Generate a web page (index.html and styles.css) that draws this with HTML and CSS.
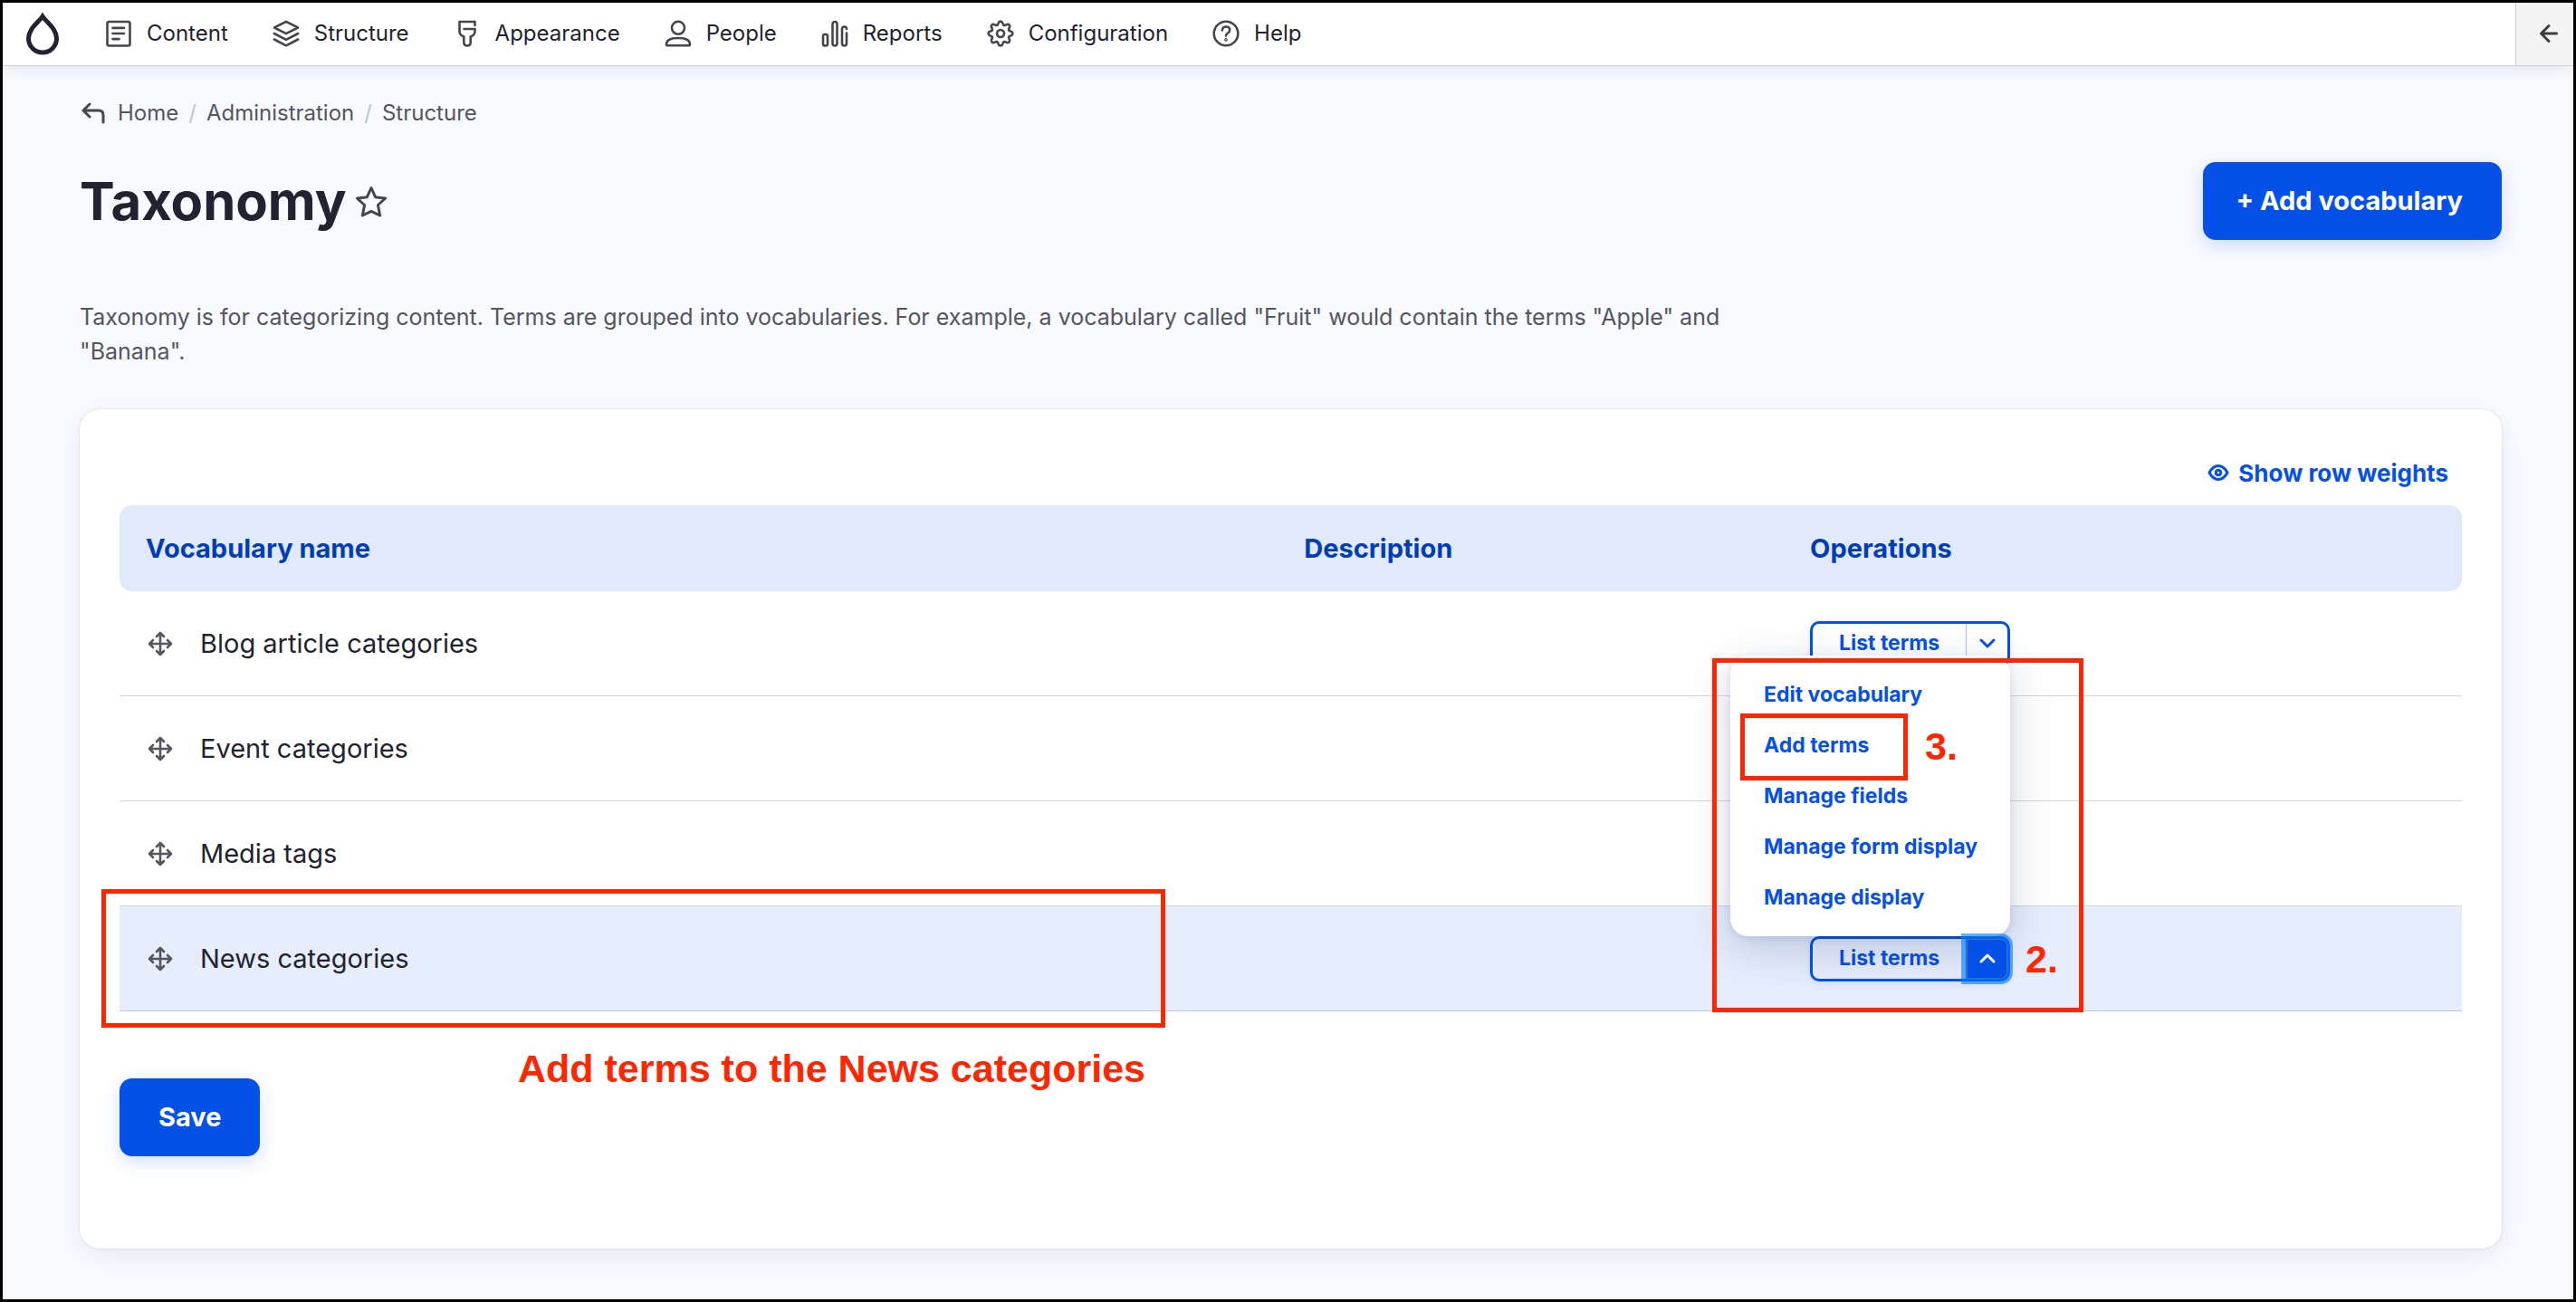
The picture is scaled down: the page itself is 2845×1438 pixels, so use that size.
FILE: index.html
```html
<!DOCTYPE html>
<html lang="en">
<head>
<meta charset="utf-8">
<title>Taxonomy</title>
<link rel="stylesheet" href="styles.css">
</head>
<body>
<header class="toolbar">
  <a class="logo" href="#" aria-label="Home"><svg width="38" height="48" viewBox="0 0 38 48"><path d="M19 5C14.500 12 3.500 18.500 3.500 29.500a15.500 15.500 0 0 0 31 0C34.500 18.500 23.500 12 19 5Z" stroke="#222330" stroke-width="5" stroke-linejoin="miter"/></svg></a>
  <nav class="menu">
    <a href="#"><svg class="icon" viewBox="0 0 30 30"><rect x="2.500" y="2" width="25" height="26.500" rx="2"/><path d="M8.500 8.900h12.500M8.500 15h12.500M8.500 21.100h7"/></svg>Content</a>
    <a href="#"><svg class="icon" viewBox="0 0 30 30"><path d="M15 1.800 28 8.500 15 15.200 2 8.500ZM1.800 15 15 21.800 28.200 15M1.800 21.500 15 28.300l13.200-6.800"/></svg>Structure</a>
    <a href="#"><svg class="icon" viewBox="0 0 30 30"><path d="M23.500 6V2H6.500v11q0 3.500 4.800 5.500v6q0 4 3.700 4t3.700-4v-6q4.800-2 4.800-5.500V10H11.500"/></svg>Appearance</a>
    <a href="#"><svg class="icon" viewBox="0 0 30 30"><circle cx="15" cy="8.800" r="7"/><path d="M2 27q0-7 13-7t13 7q0 1.300-1.500 1.300h-23Q2 28.300 2 27Z"/></svg>People</a>
    <a href="#"><svg class="icon" viewBox="0 0 30 30"><rect x="2" y="16" width="5" height="12.500" rx="2"/><rect x="12.500" y="2" width="5" height="26.500" rx="2.500"/><path d="M28 10q0-2.500-2.500-2.500T23 10v16q0 2.500 2.500 2.500T28 26V14.500"/></svg>Reports</a>
    <a href="#"><svg class="icon" viewBox="-15 -15 30 30">
      <path id="tooth" d="M-3.800-9.200c1-.4 1.300-1.400 1.600-2.600.3-1 1.200-1.600 2.200-1.600s1.900.6 2.200 1.600c.3 1.200.6 2.200 1.600 2.600"/>
      <use href="#tooth" transform="rotate(45)"/><use href="#tooth" transform="rotate(90)"/><use href="#tooth" transform="rotate(135)"/><use href="#tooth" transform="rotate(180)"/><use href="#tooth" transform="rotate(225)"/><use href="#tooth" transform="rotate(270)"/><use href="#tooth" transform="rotate(315)"/>
      <circle r="4"/></svg>Configuration</a>
    <a href="#"><svg class="icon" viewBox="0 0 30 30"><circle cx="15" cy="15" r="13.300"/><path d="M10.800 11.500q.5-4 4.200-4 4.200 0 4.200 3.700 0 2-2.200 3.300-2 1.200-2 3"/><circle cx="15" cy="21.800" r=".6"/></svg>Help</a>
  </nav>
  <button class="collapse" aria-label="Collapse toolbar"><svg width="22" height="22" viewBox="0 0 22 22"><path d="M19.500 11H3M11 2.500 2.500 11l8.500 8.500"/></svg></button>
</header>
<main class="page">
  <nav class="breadcrumb" aria-label="Breadcrumb">
    <svg width="26" height="24" viewBox="0 0 26 24"><path d="M9 2 2 9l7 7M2 9h17q5 0 5 5v8"/></svg>
    <a href="#">Home</a><span class="sep">/</span><a href="#">Administration</a><span class="sep">/</span><a href="#">Structure</a>
  </nav>
  <div class="title-row">
    <h1>Taxonomy</h1>
    <a class="star" href="#" aria-label="Add to shortcuts"><svg width="36" height="36" viewBox="0 0 36 36"><path d="m18 2.500 4.600 10.200 11 1.300-8.200 7.500 2.300 11.500L18 28.300 8.300 33l2.300-11.500L2.400 14l11-1.300Z"/></svg></a>
    <button class="primary add">+ Add vocabulary</button>
  </div>
  <p class="help">Taxonomy is for categorizing content. Terms are grouped into vocabularies. For example, a vocabulary called "Fruit" would contain the terms "Apple" and "Banana".</p>
  <form class="card">
    <button type="button" class="weights"><svg width="24" height="20" viewBox="0 0 24 20"><path d="M2 10q4-7.500 10-7.500T22 10q-4 7.500-10 7.500T2 10Z"/><circle cx="12" cy="10" r="2.800"/></svg>Show row weights</button>
    <table>
      <thead><tr><th class="c-name">Vocabulary name</th><th class="c-desc">Description</th><th>Operations</th></tr></thead>
      <tbody>
        <tr><td><div class="name"><svg class="move" viewBox="0 0 28 28"><path d="M14 2v24M2 14h24M10 6l4-4 4 4M10 22l4 4 4-4M6 10l-4 4 4 4M22 10l4 4-4 4"/></svg>Blog article categories</div></td><td></td>
          <td><div class="drop"><button type="button" class="list">List terms</button><button type="button" class="toggle" aria-label="More operations"><svg width="18" height="12" viewBox="0 0 18 12"><path d="m2 2 7 7 7-7"/></svg></button></div></td></tr>
        <tr><td><div class="name"><svg class="move" viewBox="0 0 28 28"><path d="M14 2v24M2 14h24M10 6l4-4 4 4M10 22l4 4 4-4M6 10l-4 4 4 4M22 10l4 4-4 4"/></svg>Event categories</div></td><td></td><td></td></tr>
        <tr><td><div class="name"><svg class="move" viewBox="0 0 28 28"><path d="M14 2v24M2 14h24M10 6l4-4 4 4M10 22l4 4 4-4M6 10l-4 4 4 4M22 10l4 4-4 4"/></svg>Media tags</div></td><td></td><td></td></tr>
        <tr class="active"><td><div class="name"><svg class="move" viewBox="0 0 28 28"><path d="M14 2v24M2 14h24M10 6l4-4 4 4M10 22l4 4 4-4M6 10l-4 4 4 4M22 10l4 4-4 4"/></svg>News categories</div><div class="mark mark-row"></div><p class="note note-row">Add terms to the News categories</p></td><td></td>
          <td><div class="drop open"><button type="button" class="list">List terms</button><button type="button" class="toggle" aria-label="Fewer operations" aria-expanded="true"><svg width="18" height="12" viewBox="0 0 18 12"><path d="m2 9 7-7 7 7"/></svg></button>
            <ul class="popup">
              <li><a href="#">Edit vocabulary</a></li>
              <li><a href="#">Add terms</a><div class="mark mark-item"></div><p class="note note-item">3.</p></li>
              <li><a href="#">Manage fields</a></li>
              <li><a href="#">Manage form display</a></li>
              <li><a href="#">Manage display</a></li>
            </ul>
            <div class="mark mark-ops"></div><p class="note note-ops">2.</p></div></td></tr>
      </tbody>
    </table>
    <button type="button" class="primary save">Save</button>
  </form>
</main>
</body>
</html>
```
FILE: styles.css
```css
:root {
  --blue: #0550e6;
  --ink: #222330;
  --muted: #545560;
  --red: #ff2600;
}

* { box-sizing: border-box; }

body {
  margin: 0;
  min-height: 100vh;
  border: 3px solid #000;
  background: #f9faff;
  color: var(--ink);
  font-family: Inter, "Liberation Sans", sans-serif;
  font-size: 24px;
}

a { color: inherit; text-decoration: none; }
button { font: inherit; border: 0; padding: 0; margin: 0; cursor: pointer; }
svg { flex: none; fill: none; stroke: currentColor; stroke-linecap: round; stroke-linejoin: round; }

.toolbar {
  position: relative;
  display: flex;
  height: 70px;
  padding-left: 25px;
  background: #fff;
  border-bottom: 1px solid #d0d1d7;
  box-shadow: 0 4px 16px rgba(30, 35, 60, .09);
}
.logo { display: flex; align-items: center; margin-right: 50px; padding-bottom: 2px; }
.menu { display: flex; flex: 1; gap: 49px; padding-bottom: 2px; }
.menu a { display: flex; align-items: center; gap: 16px; }
.icon { width: 30px; height: 30px; stroke: #45464c; stroke-width: 2.600; }
.collapse {
  width: 64px;
  display: grid;
  place-items: center;
  padding: 0 0 2px 8px;
  background: #f4f4f5;
  border-left: 1px solid #d0d1d7;
  color: #3c3d44;
}
.collapse svg { stroke-width: 3; }

.page { padding: 36px 79px 56px 85px; }

.breadcrumb { display: flex; align-items: center; padding-left: 2px; color: var(--muted); line-height: 32px; }
.breadcrumb svg { margin-right: 14px; color: #45464c; stroke-width: 3; }
.sep { margin: 0 11px; color: #c3c4cc; }

.title-row { display: flex; align-items: center; margin-top: 38px; height: 86px; }
h1 { margin: 0; font-size: 58px; line-height: 80px; font-weight: 700; }
.star { display: flex; margin: 2px 0 0 9px; color: #45464c; }
.star svg { stroke-width: 3; }

.primary {
  height: 86px;
  padding: 0 43px 2px;
  border-radius: 14px;
  background: var(--blue);
  color: #fff;
  font-size: 29px;
  font-weight: 700;
  box-shadow: 0 6px 20px rgba(5, 80, 230, .18);
}
.add { margin-left: auto; padding-left: 36px; }
.save { display: block; margin-top: 74px; }

.help {
  margin: 66px 0 0;
  max-width: 1860px;
  color: var(--muted);
  font-size: 25px;
  line-height: 38px;
}

.card {
  margin-top: 45px;
  padding: 44px;
  padding-bottom: 102px;
  background: #fff;
  border-radius: 22px;
  box-shadow: 0 0 2px rgba(30, 35, 60, .2), 0 8px 24px rgba(20, 45, 100, .08);
}
.weights {
  display: flex;
  align-items: center;
  gap: 10px;
  height: 52px;
  margin: 0 15px 10px auto;
  background: none;
  color: var(--blue);
  font-size: 26px;
  font-weight: 700;
}
.weights svg { stroke-width: 3; }

table { width: 100%; border-collapse: separate; border-spacing: 0; table-layout: fixed; }
th {
  height: 95px;
  padding: 0 29px;
  background: #e1e9fc;
  color: #003cb3;
  font-size: 29px;
  font-weight: 700;
  text-align: left;
}
th:first-child { border-radius: 14px 0 0 14px; }
th:last-child { border-radius: 0 14px 14px 0; }
.c-name { width: 49.45%; }
.c-desc { width: 21.6%; }
td {
  position: relative;
  height: 116px;
  padding: 0 29px;
  border-bottom: 1px solid #d4d5da;
  font-size: 29px;
}
.active td { background: #e6edfd; border-color: #c3c8d8; }
.name { display: flex; align-items: center; gap: 30px; }
.move { width: 28px; height: 28px; margin-left: 2px; color: #55565e; stroke-width: 2.600; }

.drop {
  position: relative;
  display: flex;
  width: 221px;
  height: 50px;
  border: 3px solid var(--blue);
  border-radius: 10px;
  color: var(--blue);
  font-size: 23px;
  font-weight: 700;
  box-shadow: 0 2px 8px rgba(5, 80, 230, .1);
}
.list { flex: 1; padding-bottom: 1px; background: none; color: inherit; border-right: 1px solid #a5c0f7; }
.toggle { width: 45px; display: grid; place-items: center; background: none; color: inherit; stroke-width: 3; }
.open .list { border-right-color: var(--blue); }
.open .toggle {
  position: relative;
  z-index: 3;
  background: var(--blue);
  color: #fff;
  border-radius: 0 7px 7px 0;
  box-shadow: inset 0 0 0 1px #3f73bd, 0 0 0 6px rgba(0, 122, 255, .62);
}

.popup {
  position: absolute;
  z-index: 2;
  right: -3px;
  bottom: 47px;
  width: 309px;
  margin: 0;
  padding: 15px 0 15px 37px;
  list-style: none;
  background: #fff;
  border-radius: 20px;
  box-shadow: 0 2px 8px rgba(20, 45, 100, .1), 0 14px 48px rgba(20, 45, 100, .2);
}
.popup li { position: relative; height: 56px; line-height: 56px; white-space: nowrap; }

/* Tutorial callouts */
.mark { position: absolute; z-index: 4; border: 5px solid var(--red); pointer-events: none; }
.note {
  position: absolute;
  z-index: 4;
  margin: 0;
  color: var(--red);
  font: 700 43px/50px "Liberation Sans", Arial, sans-serif;
  white-space: nowrap;
}
.mark-row { left: -20px; right: 124px; top: -19px; height: 153px; }
.note-row { left: 440px; top: 154px; }
.mark-ops { left: -111px; top: -310px; width: 410px; height: 391px; }
.note-ops { left: 235px; top: -3px; }
.mark-item { left: -26px; top: -7px; width: 185px; height: 74px; }
.note-item { left: 178px; top: 4px; }
```
